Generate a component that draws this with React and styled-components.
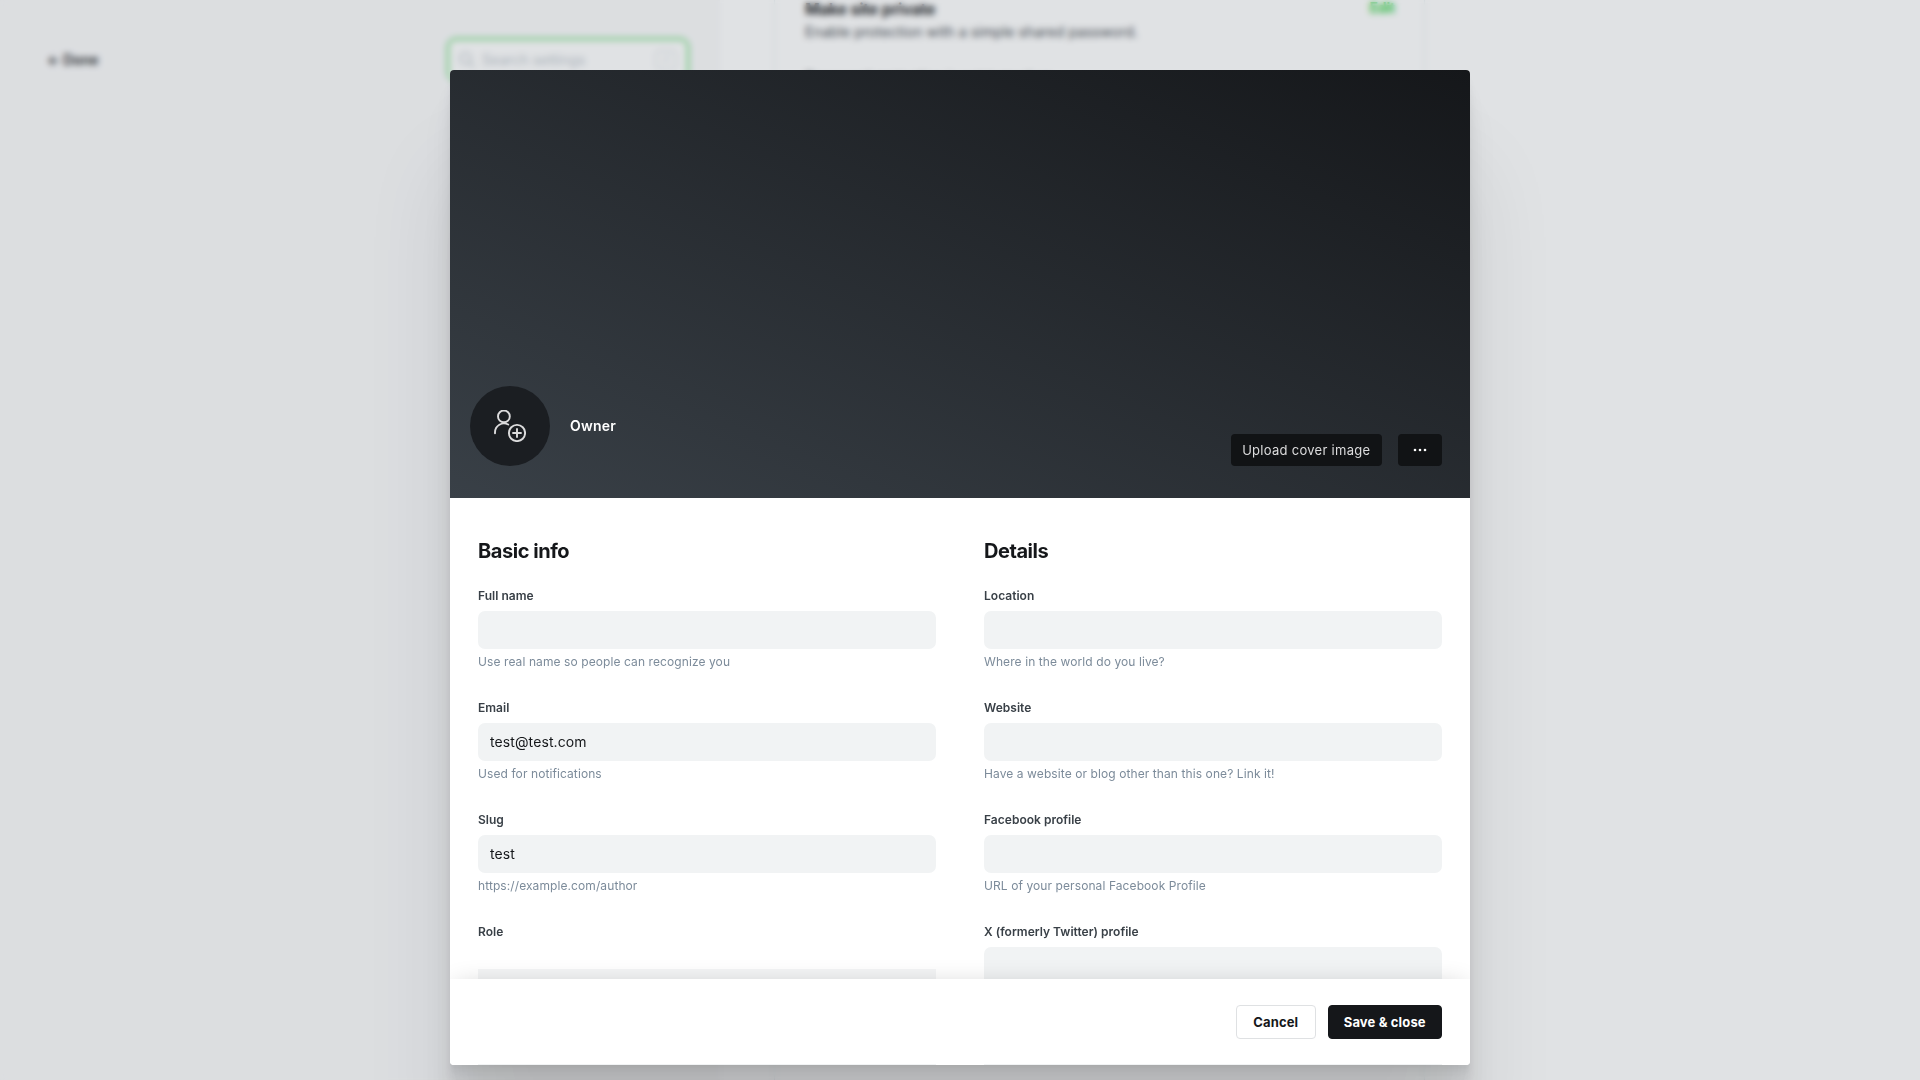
import React from "react";
import styled, { createGlobalStyle } from "styled-components";

const Global = createGlobalStyle`
  *, *::before, *::after { box-sizing: border-box; }
  body {
    margin: 0;
    background: #fff;
    color: #15171a;
    font-family: Inter, "Liberation Sans", sans-serif;
    font-size: 14px;
    line-height: 1.5;
    overflow: hidden;
  }
`;

const Page = styled.div`
  display: flex;
  height: 1080px;
  overflow: hidden;
  background: #fff;
`;

const Sidebar = styled.aside`
  display: flex;
  justify-content: space-between;
  align-items: flex-start;
  width: 720px;
  padding: 39px 32px 0 47px;
  background: #fafafb;
`;

const DoneLink = styled.a`
  display: flex;
  align-items: center;
  gap: 3px;
  height: 40px;
  font-weight: 600;
  letter-spacing: -0.1px;
`;

const SearchBox = styled.div`
  display: flex;
  align-items: center;
  width: 240px;
  height: 41px;
  padding: 0 11px 0 10px;
  border: 1px solid #30cf43;
  border-radius: 8px;
  background: #fff;
  box-shadow: 0 0 0 2px rgba(48, 207, 67, 0.35);
  color: #bac2ca;
  font-size: 14px;
`;

const SearchText = styled.span`
  flex: 1;
  margin-left: 7px;
  letter-spacing: 0.05px;
`;

const KeyHint = styled.span`
  display: grid;
  place-items: center;
  width: 20px;
  height: 20px;
  border: 1px solid #ced4d9;
  border-radius: 4px;
  font-size: 11px;
`;

const Content = styled.main`
  flex: 1;
  padding-left: 54px;
`;

const Card = styled.section`
  width: 651px;
  height: 1200px;
  padding: 0 29px 0 30px;
  border: 1px solid #e9ebee;
  border-top: 0;
`;

const CardHead = styled.div`
  display: flex;
  justify-content: space-between;
  margin-top: -2px;
  font-size: 16px;
  font-weight: 700;
  line-height: 22px;
  letter-spacing: -0.2px;
`;

const EditLink = styled.span`
  color: #30cf43;
  font-size: 14px;
  line-height: 20px;
`;

const CardText = styled.p`
  margin: 1px 0 0;
  color: #394047;
  font-size: 14px;
  line-height: 22px;
  letter-spacing: 0.1px;
`;

const CardNote = styled(CardText)`
  margin-top: 24px;
`;

const Backdrop = styled.div`
  position: fixed;
  inset: 0;
  display: flex;
  justify-content: center;
  align-items: flex-start;
  padding-top: 70px;
  background: rgba(98, 109, 121, 0.2);
  backdrop-filter: blur(3px);
`;

const Modal = styled.div`
  display: flex;
  flex-direction: column;
  width: 1020px;
  height: 995px;
  overflow: hidden;
  border-radius: 4px;
  background: #fff;
  box-shadow:
    0 2.8px 2.2px rgba(0, 0, 0, 0.02),
    0 6.7px 5.3px rgba(0, 0, 0, 0.028),
    0 12.5px 10px rgba(0, 0, 0, 0.035),
    0 22.3px 17.9px rgba(0, 0, 0, 0.042),
    0 41.8px 33.4px rgba(0, 0, 0, 0.05),
    0 100px 88px rgba(0, 0, 0, 0.1);
`;

const Cover = styled.header`
  display: flex;
  flex: none;
  align-items: flex-end;
  height: 428px;
  padding: 0 28px 32px 20px;
  background: linear-gradient(to top right, #394047, #15171a);
  color: #fff;
`;

const Avatar = styled.div`
  display: grid;
  place-items: center;
  width: 80px;
  height: 80px;
  border-radius: 50%;
  background: #1b1e22;
`;

const RoleName = styled.span`
  flex: 1;
  margin-left: 20px;
  font-weight: 600;
  line-height: 81px;
  letter-spacing: 0.2px;
`;

const CoverButton = styled.button`
  display: grid;
  place-items: center;
  width: ${(p) => p.$width}px;
  height: 32px;
  margin-left: ${(p) => p.$gap || 0}px;
  padding: 0;
  border: 0;
  border-radius: 4px;
  background: #111315;
  color: #dcdcdd;
  font: 400 13px/20px Inter, "Liberation Sans", sans-serif;
  letter-spacing: 0.28px;
`;

const Body = styled.div`
  display: grid;
  flex: 1;
  grid-template-columns: 1fr 1fr;
  column-gap: 48px;
  min-height: 0;
  padding: 39px 28px 0;
  overflow: hidden;
`;

const Column = styled.section`
  display: flex;
  flex-direction: column;
`;

const Heading = styled.h2`
  margin: 0 0 21px;
  font-size: 20px;
  font-weight: 700;
  line-height: 28px;
  letter-spacing: -0.45px;
`;

const Field = styled.div`
  display: flex;
  flex: none;
  flex-direction: column;
  height: 112px;
`;

const Label = styled.label`
  height: 25px;
  color: #394047;
  font-size: 12px;
  font-weight: 600;
  line-height: 20px;
  letter-spacing: 0.02px;
`;

const Input = styled.input`
  width: 100%;
  height: 38px;
  padding: 0 12px 2px;
  border: 0;
  border-radius: 7px;
  outline: 0;
  background: #f1f3f4;
  color: #15171a;
  font: 400 14px/20px Inter, "Liberation Sans", sans-serif;
  letter-spacing: 0.1px;
`;

const Hint = styled.span`
  margin-top: 4px;
  color: #7c8b9a;
  font-size: 12px;
  line-height: 18px;
  letter-spacing: 0.09px;
`;

const RoleList = styled.div`
  height: 60px;
  margin-top: 22px;
  background: #f4f5f6;
`;

const Footer = styled.footer`
  position: relative;
  flex: none;
  height: 86px;
  padding: 0 28px;
  background: #fff;
  box-shadow: 0 0 26px -6px rgba(0, 0, 0, 0.2);
`;

const Actions = styled.div`
  display: flex;
  align-items: center;
  justify-content: flex-end;
  gap: 12px;
  height: 85px;
`;

const NextRow = styled.div`
  display: grid;
  grid-template-columns: 1fr 1fr;
  column-gap: 48px;
  height: 1px;
`;

const NextInput = styled.span`
  background: #f1f3f4;
`;

const Button = styled.button`
  width: ${(p) => p.$width}px;
  height: 34px;
  padding: 0;
  border: 1px solid ${(p) => (p.$primary ? "#15171a" : "#dfe1e3")};
  border-radius: 4px;
  background: ${(p) => (p.$primary ? "#15171a" : "#fff")};
  color: ${(p) => (p.$primary ? "#fff" : "#15171a")};
  font: 700 13px/18px Inter, "Liberation Sans", sans-serif;
  letter-spacing: 0.15px;
`;

const basicInfo = [
  { label: "Full name", value: "", hint: "Use real name so people can recognize you" },
  { label: "Email", value: "test@test.com", hint: "Used for notifications" },
  { label: "Slug", value: "test", hint: "https://example.com/author" },
];

const details = [
  { label: "Location", value: "", hint: "Where in the world do you live?" },
  { label: "Website", value: "", hint: "Have a website or blog other than this one? Link it!" },
  { label: "Facebook profile", value: "", hint: "URL of your personal Facebook Profile" },
  { label: "X (formerly Twitter) profile", value: "", hint: "" },
];

const TextField = ({ label, value, hint }) => (
  <Field>
    <Label>{label}</Label>
    <Input value={value} readOnly aria-label={label} />
    {hint && <Hint>{hint}</Hint>}
  </Field>
);

const SearchIcon = () => (
  <svg width="16" height="16" viewBox="0 0 16 16" fill="none" stroke="currentColor" strokeWidth="1.5" strokeLinecap="round">
    <circle cx="6.5" cy="6.5" r="5.5" />
    <path d="m10.8 10.8 4.2 4.2" />
  </svg>
);

const UserAddIcon = () => (
  <svg width="32" height="32" viewBox="0 0 32 32" fill="none" stroke="#dcdcdd" strokeWidth="1.9" strokeLinecap="round">
    <circle cx="9.9" cy="6.4" r="5.9" />
    <path d="M1 23.3v-.8a9 9 0 0 1 13.2-8" />
    <circle cx="23" cy="23" r="8.1" />
    <path d="M23 19v8M19 23h8" />
  </svg>
);

const DotsIcon = () => (
  <svg width="14" height="4" viewBox="0 0 14 4" fill="#fff">
    <circle cx="2" cy="2" r="1.3" />
    <circle cx="7" cy="2" r="1.3" />
    <circle cx="12" cy="2" r="1.3" />
  </svg>
);

export default function App() {
  return (
    <>
      <Global />
      <Page>
        <Sidebar>
          <DoneLink>
            <span>←</span>
            <span>Done</span>
          </DoneLink>
          <SearchBox>
            <SearchIcon />
            <SearchText>Search settings</SearchText>
            <KeyHint>/</KeyHint>
          </SearchBox>
        </Sidebar>
        <Content>
          <Card>
            <CardHead>
              <span>Make site private</span>
              <EditLink>Edit</EditLink>
            </CardHead>
            <CardText>Enable protection with a simple shared password.</CardText>
            <CardNote>Password protection is not turned on</CardNote>
          </Card>
        </Content>
      </Page>
      <Backdrop>
        <Modal>
          <Cover>
            <Avatar>
              <UserAddIcon />
            </Avatar>
            <RoleName>Owner</RoleName>
            <CoverButton $width={151.5}>Upload cover image</CoverButton>
            <CoverButton $width={44} $gap={16} aria-label="More actions">
              <DotsIcon />
            </CoverButton>
          </Cover>
          <Body>
            <Column>
              <Heading>Basic info</Heading>
              {basicInfo.map((f) => (
                <TextField key={f.label} {...f} />
              ))}
              <Field>
                <Label>Role</Label>
                <RoleList />
              </Field>
            </Column>
            <Column>
              <Heading>Details</Heading>
              {details.map((f) => (
                <TextField key={f.label} {...f} />
              ))}
            </Column>
          </Body>
          <Footer>
            <Actions>
              <Button $width={79.5}>Cancel</Button>
              <Button $width={114.5} $primary>
                Save &amp; close
              </Button>
            </Actions>
            <NextRow>
              <NextInput />
              <NextInput />
            </NextRow>
          </Footer>
        </Modal>
      </Backdrop>
    </>
  );
}
